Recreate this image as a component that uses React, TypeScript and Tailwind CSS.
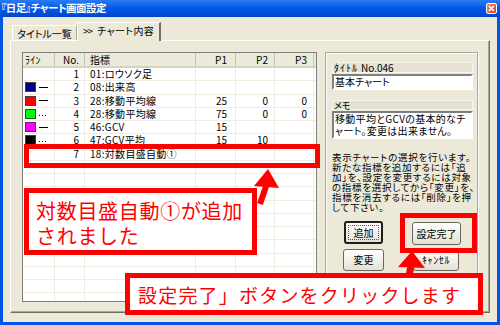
import React from "react";

type Row = {
  no: number;
  name: string;
  color?: string;
  line?: "solid" | "dot";
  p1?: string;
  p2?: string;
  p3?: string;
};

const rows: Row[] = [
  { no: 1, name: "01:ロウソク足" },
  { no: 2, name: "08:出来高", color: "#000080", line: "solid" },
  { no: 3, name: "28:移動平均線", color: "#FF0000", line: "solid", p1: "25", p2: "0", p3: "0" },
  { no: 4, name: "28:移動平均線", color: "#00FF00", line: "dot", p1: "75", p2: "0", p3: "0" },
  { no: 5, name: "46:GCV", color: "#FF00FF", line: "solid", p1: "15" },
  { no: 6, name: "47:GCV平均", color: "#000000", line: "dot", p1: "15", p2: "10" },
  { no: 7, name: "18:対数目盛自動①" },
];

function LineCell({ color, line }: { color?: string; line?: "solid" | "dot" }) {
  return (
    <div className="w-[32px] h-full flex items-center border-r border-[#EFEDE3] pl-[2px]">
      {color && (
        <>
          <div className="w-[11px] h-[10px] border border-[#404040]" style={{ backgroundColor: color }} />
          {line === "solid" ? (
            <div className="ml-[3px] w-[9px] h-[1px] bg-black" />
          ) : (
            <div className="ml-[3px] flex gap-[2px] items-center pt-[3px]">
              <div className="w-[1px] h-[1px] bg-black" />
              <div className="w-[1px] h-[1px] bg-black" />
              <div className="w-[1px] h-[1px] bg-black" />
            </div>
          )}
        </>
      )}
    </div>
  );
}

export default function App() {
  const empties = Array.from({ length: 12 });
  return (
    <div className="relative w-[500px] h-[325px] overflow-hidden bg-[#0055E5] flex flex-col font-['Noto_Sans_CJK_JP',sans-serif] text-black">
      {/* Title bar */}
      <div className="h-[17px] shrink-0 flex items-center justify-between pl-[1px] pr-[3px] bg-gradient-to-b from-[#2A7BF5] via-[#0058E6] to-[#0046CC]">
        <span className="text-white text-[10.5px] font-bold leading-none tracking-[-0.5px] [font-feature-settings:'palt']">
          『日足』チャート画面設定
        </span>
        <div className="w-[11px] h-[11px] rounded-[2px] border border-white bg-gradient-to-br from-[#F08860] to-[#D53A14] flex items-center justify-center">
          <svg width="7" height="7" viewBox="0 0 7 7">
            <path d="M1 1L6 6M6 1L1 6" stroke="white" strokeWidth="1.6" />
          </svg>
        </div>
      </div>

      {/* Body */}
      <div className="flex-1 mx-[3px] mb-[3px] bg-[#ECE9D8] flex flex-col pt-[5px] px-[7px]">
        {/* Tabs */}
        <div className="h-[18px] flex items-end text-[10px] [font-feature-settings:'palt']">
          <div className="ml-[2px] w-[65px] h-[15px] border-t border-l border-white border-r border-r-[#ACA899] flex items-center justify-center leading-none pt-[1px]">
            タイトル一覧
          </div>
          <div className="relative z-10 -mb-[1px] w-[84px] h-[19px] bg-[#ECE9D8] border-t border-l border-white border-r-2 border-r-[#716F64] flex items-center pl-[5px] leading-none pb-[2px]">
            <span className="tracking-[-1px] mr-[5px]">&gt;&gt;</span>
            <span className="tracking-[0.4px]">チャート内容</span>
          </div>
        </div>

        {/* Tab panel */}
        <div className="h-[273px] border-t border-l border-white border-r border-b border-r-[#716F64] border-b-[#716F64] shadow-[inset_-1px_-1px_0_#ACA899] flex pl-[11px] pt-[11px]">
          {/* List view */}
          <div className="w-[295px] h-[250px] border border-[#7F7F7F] bg-white flex flex-col overflow-hidden text-[10px] leading-none [font-feature-settings:'palt']">
            <div className="h-[15px] shrink-0 flex bg-[#EBEADB] border-b-2 border-b-[#D6D2C2]">
              <div className="w-[32px] flex items-center pl-[2px] border-r border-[#C5C2B2] tracking-[0.3px]">ﾗｲﾝ</div>
              <div className="w-[30px] flex items-center justify-end pr-[5px] border-r border-[#C5C2B2]">No.</div>
              <div className="w-[111px] flex items-center pl-[5px] border-r border-[#C5C2B2]">指標</div>
              <div className="w-[40px] flex items-center justify-end pr-[8px] border-r border-[#C5C2B2]">P1</div>
              <div className="w-[39px] flex items-center justify-end pr-[6px] border-r border-[#C5C2B2]">P2</div>
              <div className="w-[39px] flex items-center justify-end pr-[6px] border-r border-[#C5C2B2]">P3</div>
              <div className="flex-1" />
            </div>
            {rows.map((r) => (
              <div key={r.no} className="h-[13.25px] shrink-0 flex border-b border-[#EFEDE3]">
                <LineCell color={r.color} line={r.line} />
                <div className="w-[30px] flex items-center justify-end pr-[5px] border-r border-[#EFEDE3]">{r.no}</div>
                <div className="w-[111px] flex items-center pl-[5px] border-r border-[#EFEDE3] tracking-[0.3px] whitespace-nowrap">{r.name}</div>
                <div className="w-[40px] flex items-center justify-end pr-[8px] border-r border-[#EFEDE3]">{r.p1}</div>
                <div className="w-[39px] flex items-center justify-end pr-[6px] border-r border-[#EFEDE3]">{r.p2}</div>
                <div className="w-[39px] flex items-center justify-end pr-[6px] border-r border-[#EFEDE3]">{r.p3}</div>
                <div className="flex-1" />
              </div>
            ))}
            {empties.map((_, i) => (
              <div key={i} className="h-[13.25px] shrink-0 flex border-b border-[#EFEDE3]">
                <div className="w-[32px] border-r border-[#EFEDE3]" />
                <div className="w-[30px] border-r border-[#EFEDE3]" />
                <div className="w-[111px] border-r border-[#EFEDE3]" />
                <div className="w-[40px] border-r border-[#EFEDE3]" />
                <div className="w-[39px] border-r border-[#EFEDE3]" />
                <div className="w-[39px] border-r border-[#EFEDE3]" />
              </div>
            ))}
          </div>

          {/* Right group box */}
          <div className="ml-[8px] w-[153px] h-[252px] border border-[#ACA899] shadow-[inset_1px_1px_0_#FFFFFF,1px_1px_0_#FFFFFF] flex flex-col pl-[6px] pt-[9px] text-[10px] leading-none [font-feature-settings:'palt']">
            <div className="w-[141px] h-[11px] bg-[#E5E2D3] border border-[#F6F5EF] flex items-center pl-[1px] text-[10px]">
              <span className="tracking-[1px] mr-[3px]">ﾀｲﾄﾙ</span>
              <span>No.046</span>
            </div>
            <div className="mt-[1px] w-[141px] h-[16px] bg-white border-2 border-t-[#7F7F7F] border-l-[#7F7F7F] border-b-white border-r-white flex items-center pl-[1px]">
              基本チャート
            </div>
            <div className="mt-[10px] w-[141px] h-[10px] bg-[#E5E2D3] border border-[#F6F5EF] flex items-center pl-[1px] text-[9px]">
              メモ
            </div>
            <div className="mt-[1px] w-[141px] h-[28px] bg-white border-2 border-t-[#7F7F7F] border-l-[#7F7F7F] border-b-white border-r-white flex flex-col justify-center pl-[1px] leading-[12px] whitespace-nowrap tracking-[0.3px]">
              <span>移動平均とGCVの基本的なチ</span>
              <span>ャート。変更は出来ません。</span>
            </div>
            <div className="mt-[13px] flex flex-col text-[9.5px] leading-[10px] whitespace-nowrap tracking-[0.7px]">
              <span>表示チャートの選択を行います。</span>
              <span>新たな指標を追加するには「追</span>
              <span>加」を、設定を変更するには対象</span>
              <span>の指標を選択してから「変更」を、</span>
              <span>指標を消去するには「削除」を押</span>
              <span>して下さい。</span>
            </div>
            <div className="mt-[9px] flex flex-col gap-[4px]">
              <div className="flex">
                <div className="ml-[12px] w-[39px] h-[23px] rounded-[3px] border-2 border-[#1E1E1E] bg-gradient-to-b from-[#FFFFFF] to-[#E4E1D4] p-[2px]">
                  <div className="w-full h-full border border-dotted border-[#555] flex items-center justify-center">追加</div>
                </div>
                <div className="ml-[29px] w-[49px] h-[23px] rounded-[3px] border border-[#6A685C] bg-gradient-to-b from-[#FFFFFF] to-[#E4E1D4] flex items-center justify-center mt-[1px]">
                  設定完了
                </div>
              </div>
              <div className="flex">
                <div className="ml-[11px] w-[41px] h-[22px] rounded-[3px] border border-[#6A685C] bg-gradient-to-b from-[#FFFFFF] to-[#E4E1D4] flex items-center justify-center">
                  変更
                </div>
                <div className="ml-[29px] w-[46px] h-[22px] rounded-[3px] border border-[#6A685C] bg-gradient-to-b from-[#FFFFFF] to-[#E4E1D4] flex items-center justify-center tracking-[0.6px]">
                  ｷｬﾝｾﾙ
                </div>
              </div>
            </div>
          </div>
        </div>
      </div>

      {/* Highlight on row 7 */}
      <div className="absolute left-[24px] top-[144px] w-[296px] h-[24px] border-[5px] border-[#FF0000]" />

      {/* Highlight on 設定完了 */}
      <div className="absolute left-[400px] top-[213px] w-[77px] h-[40px] border-[5px] border-[#FF0000]" />

      {/* Callout 1 */}
      <div className="absolute left-[24px] top-[188px] w-[233px] h-[67px] border-[5px] border-[#FF0000] bg-white pl-[7px] pt-[5px] flex flex-col text-[#FF0000] text-[20px] leading-[25px] tracking-[0.7px] whitespace-nowrap">
        <span>対数目盛自動①が追加</span>
        <span>されました</span>
      </div>

      {/* Callout 2 */}
      <div className="absolute left-[125px] top-[273px] w-[358px] h-[42px] border-[5px] border-[#FF0000] bg-white pl-[8px] flex items-center text-[#FF0000] text-[19px] leading-none tracking-[1.2px] whitespace-nowrap">
        設定完了」ボタンをクリックします
      </div>

      {/* Arrows */}
      <svg className="absolute left-0 top-0 pointer-events-none" width="500" height="325" viewBox="0 0 500 325">
        <polygon points="268,169 254,186 279,188" fill="#FF0000" />
        <line x1="266.5" y1="185" x2="260" y2="204" stroke="#FF0000" strokeWidth="6" />
        <polygon points="412,251 398,267 425,268" fill="#FF0000" />
        <line x1="411" y1="266" x2="409" y2="276" stroke="#FF0000" strokeWidth="7" />
      </svg>
    </div>
  );
}
